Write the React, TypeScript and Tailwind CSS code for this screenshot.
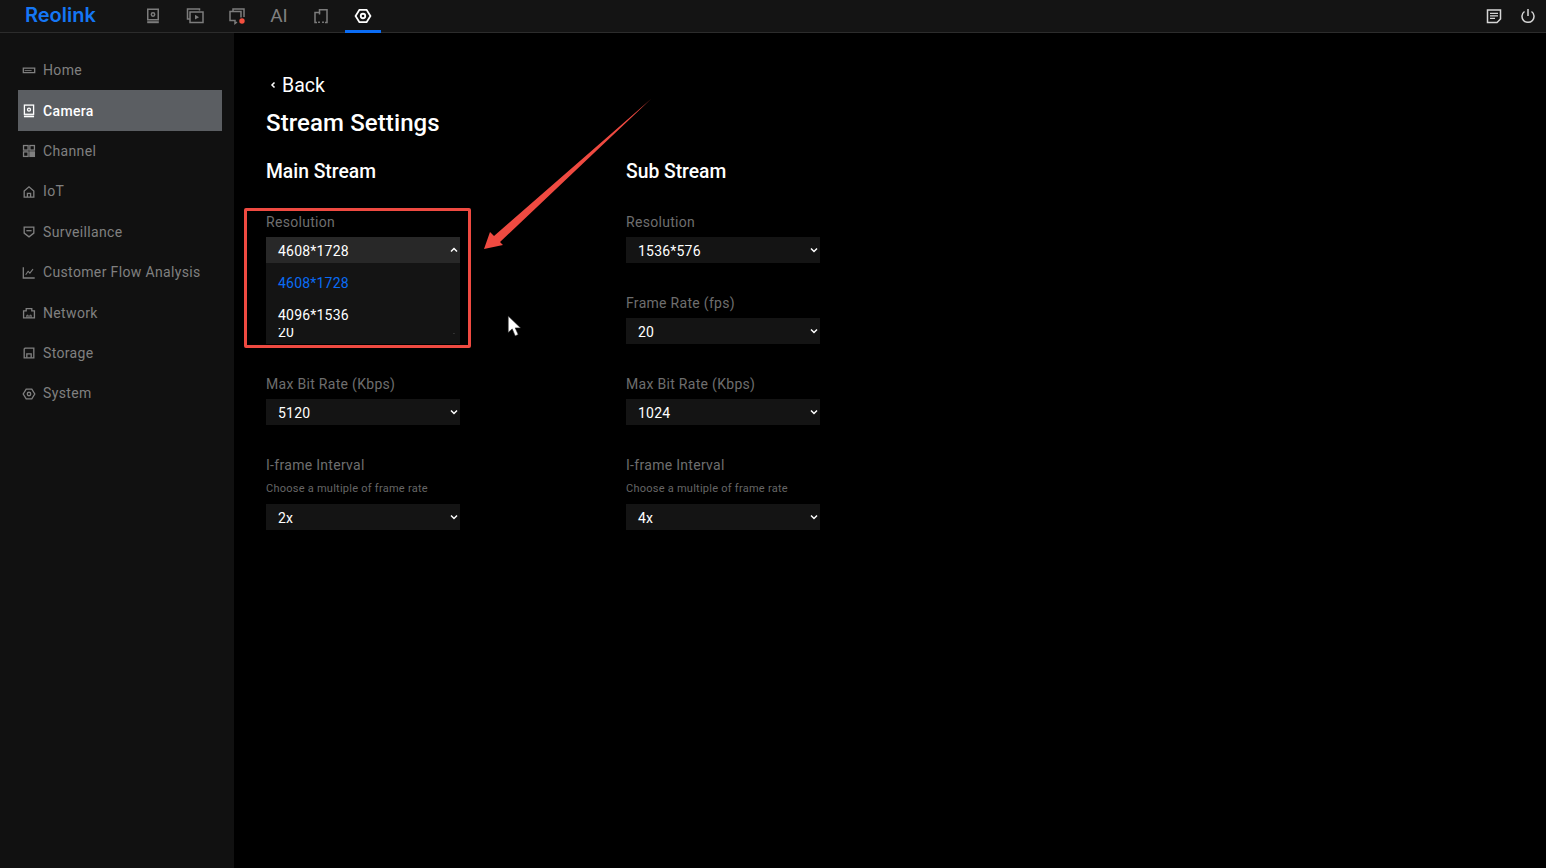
import type { ReactNode } from "react";

const stroke = {
  fill: "none",
  stroke: "currentColor",
  strokeWidth: 1.5,
};

function Svg({ size = 16, children }: { size?: number; children: ReactNode }) {
  return (
    <svg width={size} height={size} viewBox="0 0 16 16" {...stroke}>
      {children}
    </svg>
  );
}

function Chevron({ up = false }: { up?: boolean }) {
  return (
    <svg width="8" height="6" viewBox="0 0 8 6" fill="none" stroke="#fff" strokeWidth="1.5">
      <path d={up ? "M1 4.5 4 1.5 7 4.5" : "M1 1.5 4 4.5 7 1.5"} />
    </svg>
  );
}

const CameraIcon = (
  <Svg>
    <rect x="2.75" y="1.25" width="10.5" height="10.5" />
    <circle cx="8" cy="6.5" r="1.7" />
    <path d="M2.2 14.2h11.6" strokeWidth="2" />
  </Svg>
);

const HexIcon = (
  <Svg>
    <path d="M4.8 2.5h6.4L14.6 8l-3.4 5.5H4.8L1.4 8z" />
    <circle cx="8" cy="8" r="2" />
  </Svg>
);

const sideItems: { label: string; icon: ReactNode; active?: boolean }[] = [
  {
    label: "Home",
    icon: (
      <Svg>
        <path d="M1.5 4.75h13v5h-13z" />
        <path d="M3 7.5h8" strokeWidth="1" />
      </Svg>
    ),
  },
  { label: "Camera", icon: CameraIcon, active: true },
  {
    label: "Channel",
    icon: (
      <Svg>
        <rect x="1.75" y="1.75" width="5.2" height="5.2" />
        <rect x="9" y="1.75" width="5.2" height="5.2" />
        <rect x="1.75" y="9" width="5.2" height="5.2" />
        <rect x="8.3" y="8.3" width="6.6" height="6.6" fill="currentColor" stroke="none" />
      </Svg>
    ),
  },
  {
    label: "IoT",
    icon: (
      <Svg>
        <path d="M2.5 6.8 8 2l5.5 4.8v7h-11z" />
        <path d="M6.2 13.8V9.5h3.6v4.3" />
      </Svg>
    ),
  },
  {
    label: "Surveillance",
    icon: (
      <Svg>
        <path d="M2.5 2.5h11v6.8L8 13.5 2.5 9.3z" />
        <path d="M5 6.5h6" />
      </Svg>
    ),
  },
  {
    label: "Customer Flow Analysis",
    icon: (
      <Svg>
        <path d="M1.5 1.5v12.2h13" />
        <path d="m4.2 10 2.8-4 2 2.2 3.6-4.6" strokeWidth="1.2" />
      </Svg>
    ),
  },
  {
    label: "Network",
    icon: (
      <Svg>
        <path d="M1.8 5.5h3V3h6.4v2.5h3v8H1.8z" />
        <path d="M5.5 13.5v-3h1.5v3M9 13.5v-3h1.5v3" strokeWidth="1.1" />
      </Svg>
    ),
  },
  {
    label: "Storage",
    icon: (
      <Svg>
        <path d="M2.5 13.5V3.5l1-1h10v11z" />
        <path d="M5.5 13.5V9h5v4.5" />
      </Svg>
    ),
  },
  { label: "System", icon: HexIcon },
];

const mainFields = [
  { label: "Resolution", value: "4608*1728" },
  { label: "Frame Rate (fps)", value: "20" },
  { label: "Max Bit Rate (Kbps)", value: "5120" },
  { label: "I-frame Interval", value: "2x", hint: "Choose a multiple of frame rate" },
];

const subFields = [
  { label: "Resolution", value: "1536*576" },
  { label: "Frame Rate (fps)", value: "20" },
  { label: "Max Bit Rate (Kbps)", value: "1024" },
  { label: "I-frame Interval", value: "4x", hint: "Choose a multiple of frame rate" },
];

function Field({
  label,
  value,
  hint,
  open,
}: {
  label: string;
  value: string;
  hint?: string;
  open?: boolean;
}) {
  return (
    <div className="relative w-[194px]">
      <div className="text-[14px] leading-[18px] tracking-[0.3px] text-[#6e6e6e]">{label}</div>
      {hint && (
        <div className="mb-[8px] mt-[8px] text-[11px] leading-[14px] tracking-[0.25px] text-[#666666]">
          {hint}
        </div>
      )}
      <div
        className={`mt-[6px] flex h-[26px] items-center justify-between pl-[12px] pr-[2px] text-[14px] tracking-[0.2px] text-white ${
          open ? "bg-[#282828]" : "bg-[#141414]"
        }`}
      >
        <span className="pt-[2px]">{value}</span>
        <Chevron up={open} />
      </div>
    </div>
  );
}

function Column({ title, fields, open }: { title: string; fields: typeof mainFields; open?: boolean }) {
  return (
    <div className="w-[360px]">
      <h2 className="h-[24px] text-[19.3px] font-medium leading-[24px] text-white">{title}</h2>
      <div className="mt-[29px] flex flex-col gap-[31px]">
        {fields.map((f, i) => (
          <Field key={f.label} {...f} open={open && i === 0} />
        ))}
      </div>
    </div>
  );
}

export default function App() {
  return (
    <div className="flex h-screen w-full flex-col overflow-hidden bg-black font-['Roboto',sans-serif]">
      {/* top bar */}
      <header className="flex h-[33px] shrink-0 border-b border-[#2c2c2c] bg-[#141414]">
        <div className="w-[135px] pl-[25px] font-['Inter',sans-serif] text-[20px] font-semibold leading-[31px] text-[#1577f5]">
          Reolink
        </div>
        <nav className="flex gap-[6px]">
          <div className="flex w-[36px] items-center justify-center text-[#7c7c7c]">{CameraIcon}</div>
          <div className="flex w-[36px] items-center justify-center text-[#7c7c7c]">
            <svg width="18" height="18" viewBox="0 0 18 18" {...stroke}>
              <path d="M13.5 3.5V2H1.5v10H4" />
              <rect x="4" y="5" width="13" height="10.5" />
              <path d="m9 7.8 4 2.4-4 2.4z" fill="currentColor" stroke="none" />
            </svg>
          </div>
          <div className="flex w-[36px] items-center justify-center text-[#7c7c7c]">
            <svg width="18" height="18" viewBox="0 0 18 18" {...stroke}>
              <path d="M5 4V2h11v8" />
              <path d="M9 15l-2 1.500V13.500H2v-9h11v6" />
              <circle cx="14" cy="14" r="2.7" fill="#f4503f" stroke="none" />
            </svg>
          </div>
          <div className="flex w-[36px] items-center justify-center pt-px text-[19px] font-normal text-[#808080]">
            AI
          </div>
          <div className="flex w-[36px] items-center justify-center text-[#7c7c7c]">
            <svg width="16" height="16" viewBox="0 0 16 16" {...stroke}>
              <path d="M4 14.500H2V4.500h4.500V1.800H14v12.700h-2" />
              <path d="M6.500 4.500v2" />
              <path d="M6 13.500v1.500M10 13.500v1.500" strokeWidth="1.800" />
            </svg>
          </div>
          <div className="relative flex w-[36px] items-center justify-center text-white">
            <svg width="18" height="18" viewBox="0 0 16 16" fill="none" stroke="currentColor" strokeWidth="1.6">
              <path d="M4.8 2.5h6.4L14.6 8l-3.4 5.5H4.8L1.4 8z" />
              <circle cx="8" cy="8" r="2" />
            </svg>
            <div className="absolute bottom-[-1px] left-0 h-[3px] w-full bg-[#0a6cf5]" />
          </div>
        </nav>
        <div className="ml-auto flex items-center gap-[18px] pr-[10px] text-[#d6d6d6]">
          <Svg>
            <path d="M1.5 2h13v9l-3.5 3.5h-9.5z" />
            <path d="M4 5.3h8M4 7.8h8M4 10.3h5" strokeWidth="1.2" />
          </Svg>
          <Svg>
            <path d="M4.5 3.5a6 6 0 1 0 7 0" />
            <path d="M8 1v7" />
          </Svg>
        </div>
      </header>

      <div className="flex min-h-0 flex-1">
        {/* side menu */}
        <aside className="w-[234px] shrink-0 bg-[#111111] pl-[18px] pr-[12px] pt-[17px]">
          {sideItems.map((item) => (
            <div
              key={item.label}
              className={`flex h-[40.4px] items-center gap-[7px] pl-[4px] pt-px text-[14px] tracking-[0.35px] ${
                item.active ? "bg-[#5b5e62] font-medium text-white" : "text-[#808080]"
              }`}
            >
              <span className="flex w-[14px] shrink-0 justify-center">{item.icon}</span>
              <span>{item.label}</span>
            </div>
          ))}
        </aside>

        {/* content */}
        <main className="relative flex-1 pl-[32px] pt-[40px]">
          <div className="flex h-[24px] items-center gap-[6px] text-[19.5px] leading-[24px] text-white">
            <svg className="ml-[4px]" width="6" height="8" viewBox="0 0 6 8" fill="none" stroke="#fff" strokeWidth="1.5">
              <path d="M4.5 1.500 2 4l2.500 2.500" />
            </svg>
            <span className="pt-[2px]">Back</span>
          </div>
          <h1 className="mt-[10px] h-[32px] text-[24px] font-medium leading-[32px] tracking-[0.1px] text-white">
            Stream Settings
          </h1>
          <div className="mt-[21px] flex">
            <Column title="Main Stream" fields={mainFields} open />
            <Column title="Sub Stream" fields={subFields} />
          </div>

          {/* open dropdown list */}
          <div className="absolute left-[32px] top-[230px] flex h-[65px] w-[194px] flex-col justify-center bg-[#141414] pl-[12px] text-[14px] tracking-[0.2px]">
            <div className="h-[32px] leading-[39px] text-[#0a6cf5]">4608*1728</div>
            <div className="h-[32px] leading-[39px] text-white">4096*1536</div>
            <div className="absolute right-0 top-[65px] h-[5px] w-[12px] bg-[#141414]" />
          </div>

          {/* annotation marks */}
          <div className="absolute left-[10px] top-[175px] h-[140px] w-[227px] rounded-[2px] border-[3px] border-[#ef4a41]" />
          <svg className="absolute left-[246px] top-[62px]" width="175" height="160" viewBox="480 95 175 160">
            <path d="M651 99 500 242 503 245 484 249 490 232 494 236z" fill="#ef4a41" />
          </svg>
          <svg className="absolute left-[273px] top-[282px]" width="16" height="23" viewBox="0 0 16 23">
            <path d="M1.2 1v16.5l4-3.6 3 7 3-1.4-3-6.6h5.4z" fill="#fff" stroke="#222" strokeWidth="0.6" />
          </svg>
        </main>
      </div>
    </div>
  );
}
